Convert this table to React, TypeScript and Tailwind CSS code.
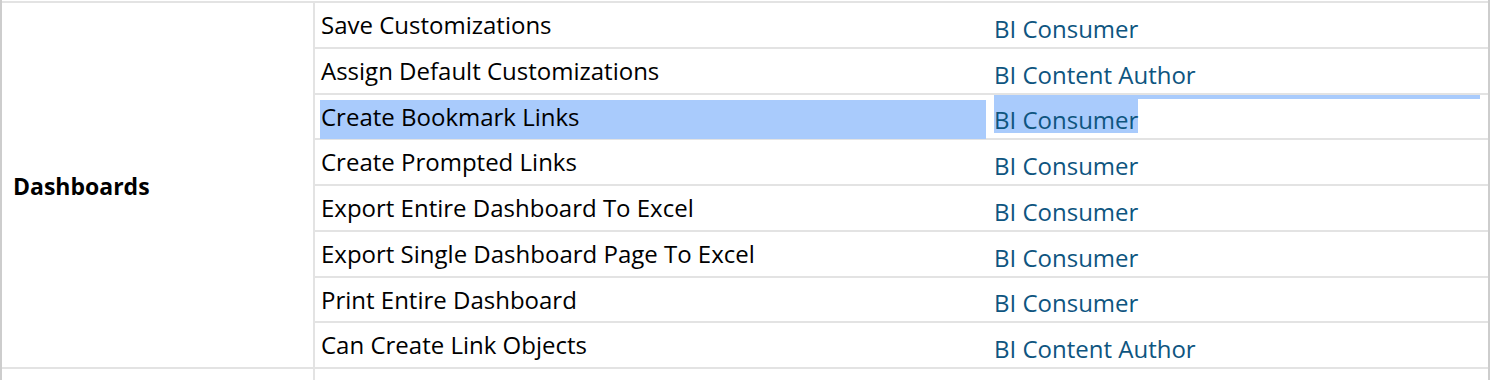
import React from "react";

type Row = { privilege: string; role: string; h: string; selected?: boolean };

const rows: Row[] = [
  { privilege: "Save Customizations", role: "BI Consumer", h: "h-[46px]" },
  { privilege: "Assign Default Customizations", role: "BI Content Author", h: "h-[46px]" },
  { privilege: "Create Bookmark Links", role: "BI Consumer", h: "h-[45px]", selected: true },
  { privilege: "Create Prompted Links", role: "BI Consumer", h: "h-[46px]" },
  { privilege: "Export Entire Dashboard To Excel", role: "BI Consumer", h: "h-[46px]" },
  { privilege: "Export Single Dashboard Page To Excel", role: "BI Consumer", h: "h-[46px]" },
  { privilege: "Print Entire Dashboard", role: "BI Consumer", h: "h-[45px]" },
  { privilege: "Can Create Link Objects", role: "BI Content Author", h: "h-[46px]" },
];

const font = { fontFamily: '"Open Sans", "Noto Sans", sans-serif' };

export default function App() {
  return (
    <div className="w-[1492px] h-[380px] bg-white overflow-hidden" style={font}>
      <div className="w-[1490px] h-[380px] border-l-2 border-r-2 border-[#cdcdcd] flex flex-col">
        <div className="mt-[1px] h-[2px] bg-[#e3e3e3]" />
        <div className="flex">
          {/* group column */}
          <div className="w-[311px] flex items-center pl-[11px] pt-[3px] border-b-2 border-[#e3e3e3]">
            <span className="text-[23px] leading-none font-bold text-black">Dashboards</span>
          </div>
          <div className="w-[2px] bg-[#e3e3e3]" />
          {/* privilege rows */}
          <div className="flex-1 flex flex-col">
            {rows.map((r) => (
              <div key={r.privilege} className={`${r.h} flex border-b-2 border-[#e3e3e3]`}>
                <div className="relative w-[671px] flex items-center pl-[6px]">
                  {r.selected && (
                    <div className="absolute left-[5px] right-0 top-[5px] h-[39px] bg-[#a9cbfc]" />
                  )}
                  <span className="relative text-[24px] leading-none text-black">{r.privilege}</span>
                </div>
                <div className="relative flex-1 flex items-center pl-[8px] pt-[7px]">
                  {r.selected && (
                    <div className="absolute left-[8px] right-[8px] top-0 h-[4px] bg-[#a9cbfc]" />
                  )}
                  <span className="relative text-[24px] leading-[32px] text-[#0e557f]">
                    {r.selected && (
                      <span className="absolute left-0 right-0 top-[-5px] bottom-[3px] bg-[#a9cbfc]" />
                    )}
                    <span className="relative">{r.role}</span>
                  </span>
                </div>
              </div>
            ))}
          </div>
        </div>
        <div className="flex flex-1">
          <div className="w-[311px]" />
          <div className="w-[2px] bg-[#e3e3e3]" />
          <div className="flex-1" />
        </div>
      </div>
    </div>
  );
}
